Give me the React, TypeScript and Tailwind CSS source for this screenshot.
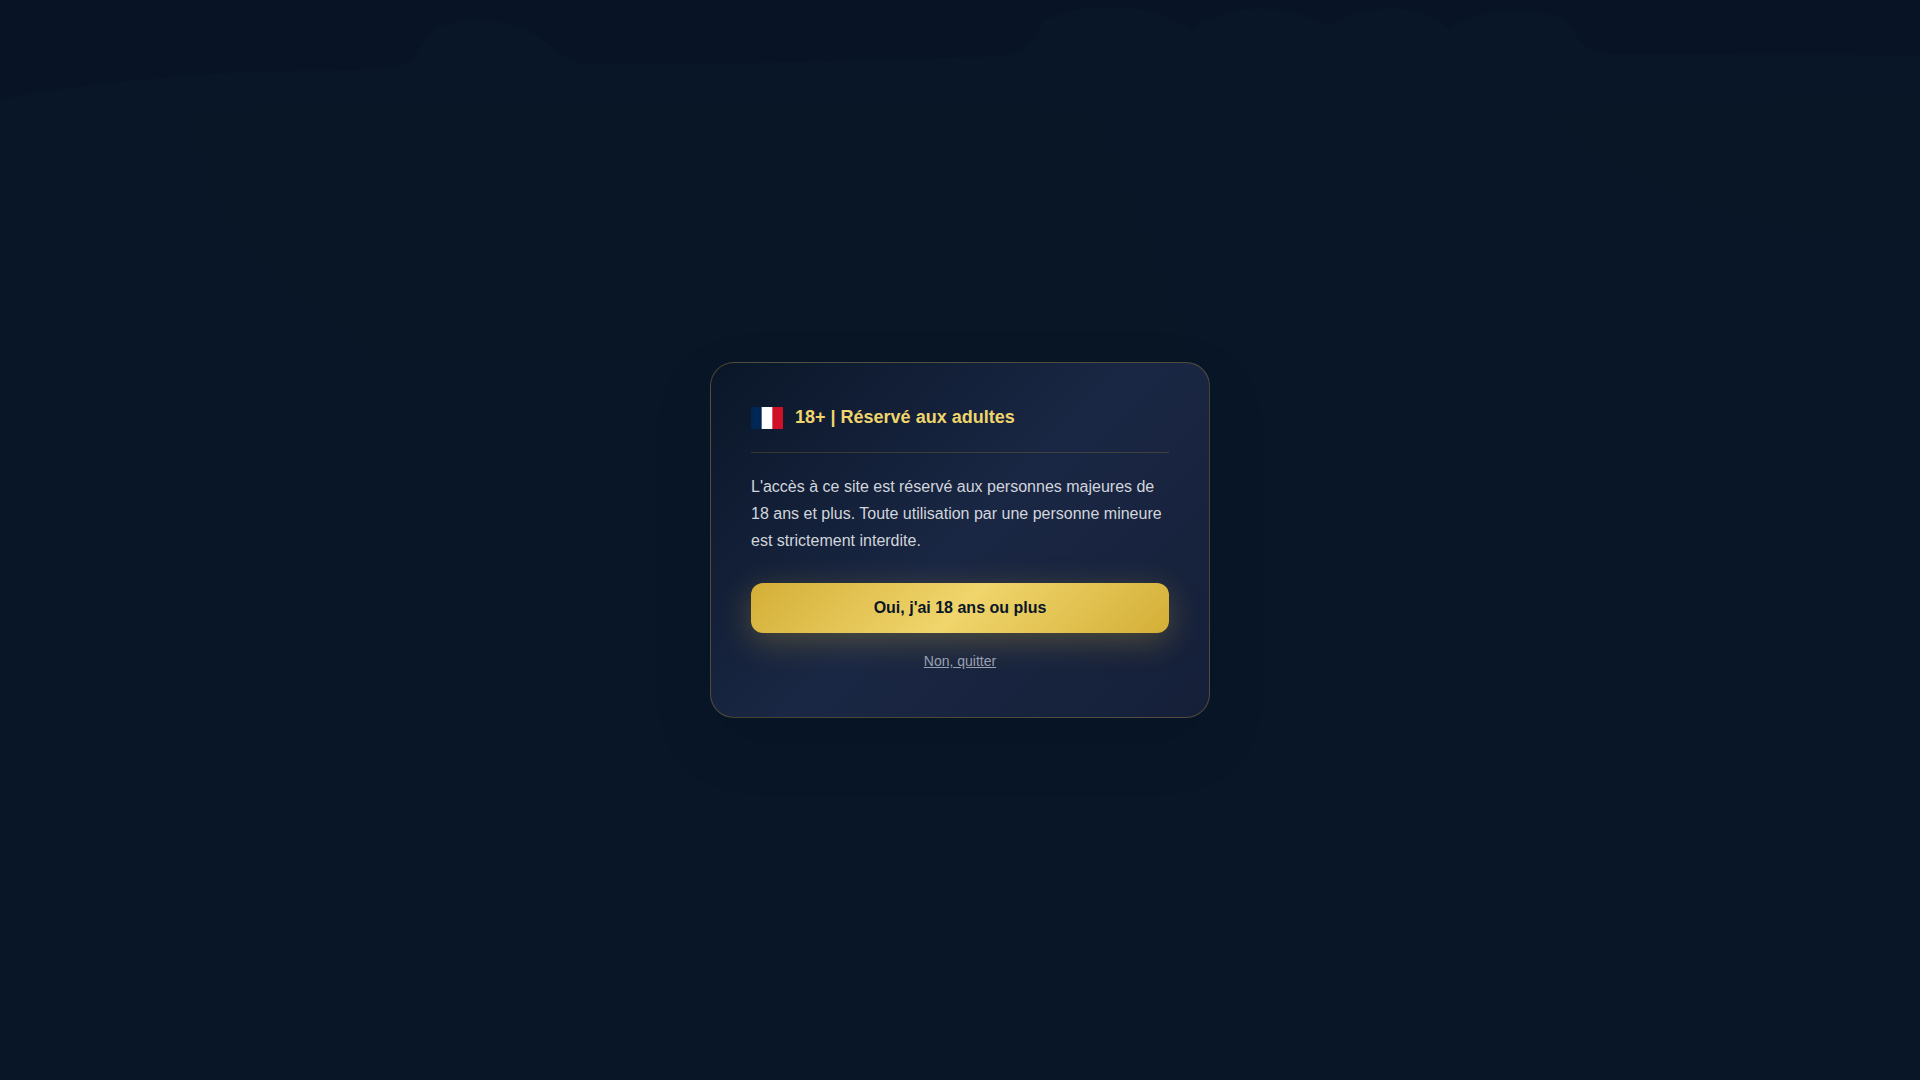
import React from "react";

const siteUrl = "#quitter";

function FrenchFlag() {
  return (
    <svg className="h-[22px] w-8 shrink-0" viewBox="0 0 32 22" role="img" aria-label="France">
      <rect width="32" height="22" fill="#ffffff" />
      <rect width="10.67" height="22" fill="#002654" />
      <rect x="21.33" width="10.67" height="22" fill="#ce1126" />
    </svg>
  );
}

// Faint, heavily dimmed page glow that stays behind the dialog
function Backdrop() {
  return (
    <svg
      className="absolute inset-0 h-full w-full"
      viewBox="0 0 1920 1080"
      preserveAspectRatio="none"
      aria-hidden="true"
    >
      <rect width="1920" height="1080" fill="#081628" />
      <path
        d="M0 0H1920V56C1860 54 1700 54 1610 54C1570 48 1580 26 1560 18C1530 6 1480 8 1448 28C1420 4 1370 0 1328 26C1290 4 1230 0 1190 30C1160 2 1080 0 1045 20C1032 34 1036 52 1000 56C880 60 730 64 585 64C555 62 545 20 475 20C430 20 425 40 412 60C390 74 330 68 240 72C150 78 60 86 0 100Z"
        fill="#081425"
      />
      <path
        d="M195 110C500 96 800 96 1090 110C1130 180 1180 340 1200 360H380C300 300 190 220 195 110Z"
        fill="#081626"
      />
      <path d="M1550 112C1700 98 1800 100 1920 96V240C1800 240 1640 210 1550 112Z" fill="#081626" />
    </svg>
  );
}

function AgeGate() {
  return (
    <section
      role="dialog"
      aria-modal="true"
      aria-labelledby="age-title"
      className="relative w-full max-w-[500px] rounded-3xl border border-[#d4af37]/30 bg-[linear-gradient(135deg,#0a1628_0%,#1a2744_50%,#151f38_100%)] p-10 shadow-[0_24px_64px_rgba(0,0,0,0.1)]"
    >
      <div className="mb-5 flex items-center gap-3 border-b border-[#d4af37]/20 pb-5">
        <FrenchFlag />
        <h1 id="age-title" className="text-lg leading-[29px] font-bold text-[#f0d56c]">
          18+ | Réservé aux adultes
        </h1>
      </div>
      <p className="mb-[29px] text-base leading-[27px] text-gray-300">
        L'accès à ce site est réservé aux personnes majeures de 18 ans et plus. Toute utilisation par une personne
        mineure est strictement interdite.
      </p>
      <button
        type="button"
        className="mb-3 h-[50px] w-full cursor-pointer rounded-xl bg-[linear-gradient(135deg,#d4af37_0%,#f0d56c_50%,#d4af37_100%)] text-base font-bold text-[#0a1628] shadow-[0_8px_32px_rgba(212,175,55,0.3)]"
      >
        Oui, j'ai 18 ans ou plus
      </button>
      <a href={siteUrl} className="block py-2 text-center text-sm leading-4 text-gray-400 underline">
        Non, quitter
      </a>
    </section>
  );
}

function App() {
  return (
    <main className="relative flex min-h-screen items-center justify-center overflow-hidden bg-[#081628] p-4 font-['Liberation_Sans',Arial,sans-serif]">
      <Backdrop />
      <AgeGate />
    </main>
  );
}

export default App;
